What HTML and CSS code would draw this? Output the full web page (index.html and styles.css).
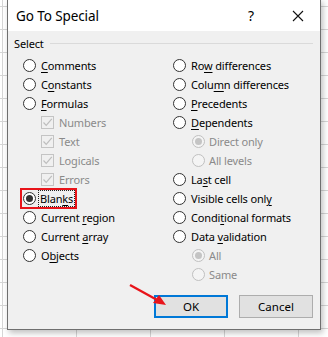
FILE: index.html
```html
<!DOCTYPE html>
<html>
<head>
  <meta charset="UTF-8">
  <title>Go To Special</title>
  <link rel="stylesheet" href="styles.css">
</head>
<body>
  <div class="dialog">
    <div class="titlebar">
      <span class="title">Go To Special</span>
      <span class="help">?</span>
      <span class="close">
        <svg width="12" height="12" viewBox="0 0 12 12"><path d="M1 1 L11 11 M11 1 L1 11" stroke="#111" stroke-width="1.1" fill="none"/></svg>
      </span>
    </div>

    <div class="content">
      <div class="group-label"><span>Select</span><span class="rule"></span></div>

      <div class="columns">
        <div class="col">
          <div class="opt"><span class="radio"></span><span><u>C</u>omments</span></div>
          <div class="opt"><span class="radio"></span><span>C<u>o</u>nstants</span></div>
          <div class="opt"><span class="radio"></span><span><u>F</u>ormulas</span></div>
          <div class="opt sub off"><span class="check"><svg width="11" height="11" viewBox="0 0 11 11"><path d="M1.5 5.5 L4.2 8.3 L9.8 1.8" stroke="#bdbdbd" stroke-width="1.2" fill="none"/></svg></span><span>Numbers</span></div>
          <div class="opt sub off"><span class="check"><svg width="11" height="11" viewBox="0 0 11 11"><path d="M1.5 5.5 L4.2 8.3 L9.8 1.8" stroke="#bdbdbd" stroke-width="1.2" fill="none"/></svg></span><span>Text</span></div>
          <div class="opt sub off"><span class="check"><svg width="11" height="11" viewBox="0 0 11 11"><path d="M1.5 5.5 L4.2 8.3 L9.8 1.8" stroke="#bdbdbd" stroke-width="1.2" fill="none"/></svg></span><span>Logicals</span></div>
          <div class="opt sub off"><span class="check"><svg width="11" height="11" viewBox="0 0 11 11"><path d="M1.5 5.5 L4.2 8.3 L9.8 1.8" stroke="#bdbdbd" stroke-width="1.2" fill="none"/></svg></span><span>Errors</span></div>
          <div class="opt"><span class="marked"><span class="radio on"></span><span class="focus">Blan<u>k</u>s</span></span></div>
          <div class="opt"><span class="radio"></span><span>Current <u>r</u>egion</span></div>
          <div class="opt"><span class="radio"></span><span>Current <u>a</u>rray</span></div>
          <div class="opt"><span class="radio"></span><span>O<u>b</u>jects</span></div>
        </div>

        <div class="col">
          <div class="opt"><span class="radio"></span><span>Ro<u>w</u> differences</span></div>
          <div class="opt"><span class="radio"></span><span>Colu<u>m</u>n differences</span></div>
          <div class="opt"><span class="radio"></span><span><u>P</u>recedents</span></div>
          <div class="opt"><span class="radio"></span><span><u>D</u>ependents</span></div>
          <div class="opt sub2 off"><span class="radio on"></span><span>Direct only</span></div>
          <div class="opt sub2 off"><span class="radio"></span><span>All levels</span></div>
          <div class="opt"><span class="radio"></span><span>La<u>s</u>t cell</span></div>
          <div class="opt"><span class="radio"></span><span>Visible cells onl<u>y</u></span></div>
          <div class="opt"><span class="radio"></span><span>Condi<u>t</u>ional formats</span></div>
          <div class="opt"><span class="radio"></span><span>Data <u>v</u>alidation</span></div>
          <div class="opt sub2 off"><span class="radio on"></span><span>All</span></div>
          <div class="opt sub2 off"><span class="radio"></span><span>Same</span></div>
        </div>
      </div>

      <div class="buttons">
        <button class="btn default">OK</button>
        <button class="btn">Cancel</button>
      </div>
    </div>

    <!-- annotation arrow pointing at OK -->
    <svg class="arrow" width="44" height="28" viewBox="0 0 44 28">
      <path d="M2 2 L31 18" stroke="#e8141a" stroke-width="2.2" fill="none"/>
      <path d="M38 22 L25 20 L31 12 Z" fill="#e8141a"/>
    </svg>
  </div>
</body>
</html>
```

FILE: styles.css
```css
body {
  margin: 0;
  width: 328px;
  height: 337px;
  overflow: hidden;
  font-family: "Noto Sans", "Open Sans", sans-serif;
  font-size: 11px;
  letter-spacing: -0.15px;
  color: #000;
  background-color: #fff;
  background-image:
    linear-gradient(to right, #d6d6d6 1px, transparent 1px),
    linear-gradient(to bottom, #d6d6d6 1px, transparent 1px);
  background-size: 74px 23px;
  background-position: 2px 6px;
}

.dialog {
  position: relative;
  width: 312px;
  height: 329px;
  margin: -1px 0 0 7px;
  border: 1px solid #6f6f6f;
  background: #f0f0f0;
  box-shadow: 2px 3px 6px rgba(0, 0, 0, 0.25);
}

.titlebar {
  height: 31px;
  background: #fff;
  display: flex;
  align-items: center;
  padding: 0 0 0 8px;
}

.title {
  font-size: 13.5px;
  letter-spacing: -0.1px;
  flex-grow: 1;
  padding-top: 1px;
}

.help {
  font-size: 14px;
  width: 44px;
  text-align: left;
}

.close {
  width: 28px;
  display: flex;
  align-items: center;
}

.content {
  padding: 4px 0 0 6px;
}

.group-label {
  display: flex;
  align-items: center;
  height: 16px;
}

.rule {
  flex-grow: 1;
  height: 1px;
  background: #dadada;
  margin: 1px 7px 0 6px;
}

.columns {
  display: grid;
  grid-template-columns: 150px 150px;
  padding: 5px 0 0 9px;
}

.opt {
  height: 19px;
  display: flex;
  align-items: center;
  gap: 5px;
  white-space: nowrap;
}

.opt u {
  text-decoration-thickness: 1px;
  text-underline-offset: 2px;
}

.radio {
  width: 11px;
  height: 11px;
  border: 1px solid #333;
  border-radius: 50%;
  background: #fff;
  display: flex;
  align-items: center;
  justify-content: center;
  flex-shrink: 0;
}

.radio.on::after {
  content: "";
  width: 7px;
  height: 7px;
  border-radius: 50%;
  background: #333;
}

.check {
  width: 11px;
  height: 11px;
  border: 1px solid #c4c4c4;
  display: flex;
  align-items: center;
  justify-content: center;
  flex-shrink: 0;
}

.sub {
  padding-left: 18px;
}

.sub2 {
  padding-left: 19px;
  gap: 4px;
}

.off {
  color: #8a8a8a;
}

.off .radio {
  border-color: #c0c0c0;
  background: #f4f4f4;
}

.off .radio.on::after {
  background: #c4c4c4;
}

.marked {
  display: flex;
  align-items: center;
  gap: 3px;
  border: 2px solid #e8141a;
  padding: 1px 1px 1px 1px;
  margin: -3px -3px -3px -3px;
}

.focus {
  outline: 1px dotted #222;
  padding: 0 1px;
  line-height: 15px;
}

.buttons {
  display: flex;
  justify-content: flex-end;
  gap: 11px;
  padding: 11px 7px 0 0;
}

.btn {
  width: 74px;
  height: 23px;
  font-family: "Noto Sans", "Open Sans", sans-serif;
  font-size: 11.5px;
  color: #000;
  background: #e1e1e1;
  border: 1px solid #adadad;
  padding: 0;
}

.btn.default {
  border: 2px solid #0078d7;
}

.arrow {
  position: absolute;
  left: 120px;
  top: 283px;
}
```
